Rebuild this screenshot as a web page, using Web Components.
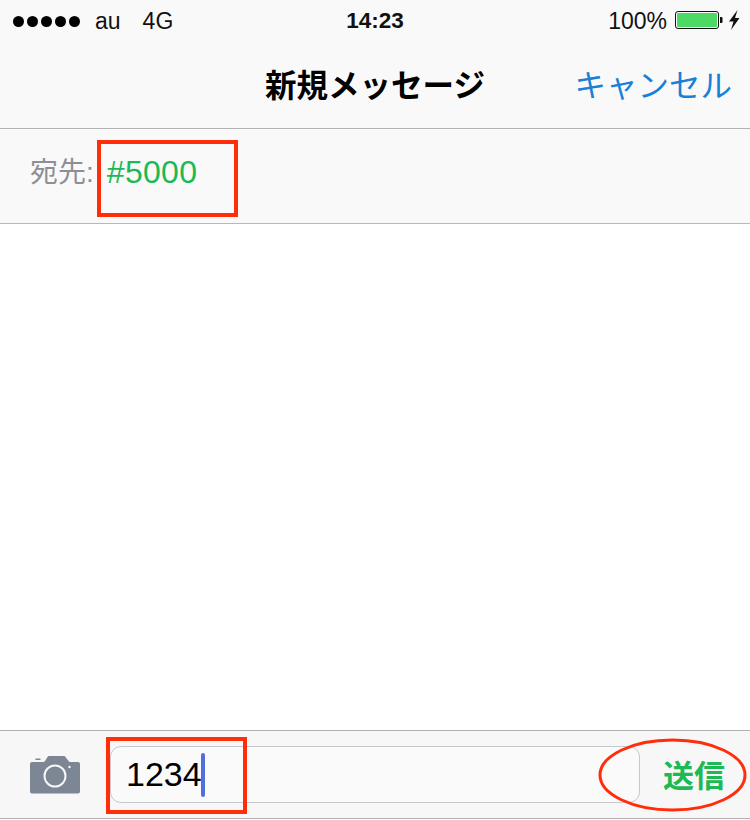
<!DOCTYPE html>
<html lang="ja">
<head>
<meta charset="utf-8">
<title>新規メッセージ</title>
<style>
  html, body { margin: 0; height: 100%; background: #fff; }
  body {
    width: 750px;
    height: 820px;
    overflow: hidden;
    display: flex;
    flex-direction: column;
    font-family: "Liberation Sans", "Noto Sans CJK JP", sans-serif;
  }
  message-body { flex: 1; }
</style>
</head>
<body>
<status-bar></status-bar>
<nav-bar title="新規メッセージ" action="キャンセル"></nav-bar>
<recipient-row label="宛先:" value="#5000"></recipient-row>
<message-body></message-body>
<compose-bar text="1234" send="送信"></compose-bar>

<script>
// Shared font stack, custom properties would work too but this is shorter
const FONT = `"Liberation Sans", "Noto Sans CJK JP", sans-serif`;

class StatusBar extends HTMLElement {
  constructor() {
    super();
    this.attachShadow({ mode: 'open' });
  }

  connectedCallback() {
    this.shadowRoot.innerHTML = `
      <style>
        :host {
          display: grid;
          grid-template-columns: 1fr auto 1fr;
          align-items: center;
          height: 42px;
          background: #f9f9f9;
          color: #111;
          font: 23px ${FONT};
        }
        .left { display: flex; align-items: center; padding-left: 13px; }
        .dots { display: flex; gap: 3px; margin-right: 15px; }
        .dots i { width: 11px; height: 11px; border-radius: 50%; background: #000; }
        .net { margin-left: 22px; }
        .time { font-size: 22.500px; font-weight: 700; }
        .right { display: flex; align-items: center; justify-content: flex-end; padding-right: 10px; }
        .pct { margin-right: 8px; }
        svg { display: block; margin-bottom: 2px; }
      </style>
      <div class="left">
        <div class="dots"><i></i><i></i><i></i><i></i><i></i></div>
        <span>au</span><span class="net">4G</span>
      </div>
      <div class="time">14:23</div>
      <div class="right">
        <span class="pct">100%</span>
        <svg width="65" height="22" viewBox="0 0 65 22">
          <rect x="0.5" y="2.5" width="43" height="17" rx="2.5" fill="none" stroke="#111"/>
          <rect x="2" y="4" width="40" height="14" rx="1" fill="#4cd964"/>
          <path d="M45 8h1.5a1 1 0 0 1 1 1v4a1 1 0 0 1-1 1H45z" fill="#111"/>
          <path d="M62.500 1 L54 12.500 H58.500 L56 21 L64.500 9 H60z" fill="#111"/>
        </svg>
      </div>
    `;
  }
}

class NavBar extends HTMLElement {
  constructor() {
    super();
    this.attachShadow({ mode: 'open' });
  }

  connectedCallback() {
    const title = this.getAttribute('title');
    const action = this.getAttribute('action');
    this.shadowRoot.innerHTML = `
      <style>
        :host {
          display: grid;
          grid-template-columns: 1fr auto 1fr;
          align-items: center;
          height: 87px;
          box-sizing: border-box;
          padding: 0 0 5px;
          background: #f9f9f9;
          border-bottom: 1px solid #b2b2b2;
          font-family: ${FONT};
        }
        .title { font-size: 31.500px; font-weight: 700; color: #000; }
        .action { justify-self: end; margin-right: 18px; font-size: 31.500px; color: #1a7fd6; }
      </style>
      <span></span>
      <span class="title">${title}</span>
      <span class="action">${action}</span>
    `;
  }
}

class AnnoBox extends HTMLElement {
  constructor() {
    super();
    this.attachShadow({ mode: 'open' });
  }

  connectedCallback() {
    this.shadowRoot.innerHTML = `
      <style>
        :host {
          display: block;
          position: absolute;
          box-sizing: border-box;
          border: 4px solid #ff2d0a;
          pointer-events: none;
        }
      </style>
    `;
  }
}

class RecipientRow extends HTMLElement {
  constructor() {
    super();
    this.attachShadow({ mode: 'open' });
  }

  connectedCallback() {
    this.shadowRoot.innerHTML = `
      <style>
        :host {
          display: flex;
          align-items: center;
          position: relative;
          height: 95px;
          box-sizing: border-box;
          padding: 0 0 5px 30px;
          background: #f9f9f9;
          border-bottom: 1px solid #b8b8b8;
          font-family: ${FONT};
        }
        .label { color: #8e8e93; font-size: 28px; margin: 0 13px 7px 0; }
        .value { color: #1cb954; font-size: 32px; letter-spacing: 0.3px; margin-bottom: 2px; }
        anno-box { left: 97px; top: 11px; width: 141px; height: 77px; }
      </style>
      <span class="label">${this.getAttribute('label')}</span>
      <span class="value">${this.getAttribute('value')}</span>
      <anno-box></anno-box>
    `;
  }
}

class ComposeBar extends HTMLElement {
  constructor() {
    super();
    this.attachShadow({ mode: 'open' });
  }

  connectedCallback() {
    this.shadowRoot.innerHTML = `
      <style>
        :host {
          display: flex;
          align-items: center;
          position: relative;
          height: 89px;
          box-sizing: border-box;
          margin-bottom: 1px;
          padding: 0 0 0 30px;
          background: #f7f7f7;
          border-top: 1px solid #b2b2b2;
          border-bottom: 1px solid #b2b2b2;
          font-family: ${FONT};
        }
        svg.cam { display: block; flex: none; margin-right: 30px; }
        .field {
          flex: none;
          display: flex;
          align-items: center;
          box-sizing: border-box;
          width: 530px;
          height: 57px;
          padding-left: 15px;
          background: #fafafa;
          border: 1px solid #c8c8cc;
          border-radius: 11px;
          font-size: 34px;
          color: #000;
        }
        .caret {
          width: 4px;
          height: 44px;
          margin-left: -1px;
          border-radius: 2px;
          background: #4f6fdc;
        }
        .send {
          flex: 1;
          text-align: center;
          padding: 0 2px 2px 0;
          font-size: 31px;
          font-weight: 700;
          color: #1cb954;
        }
        anno-box { left: 106px; top: 6px; width: 141px; height: 77px; }
        svg.ring { position: absolute; left: 598px; top: 6px; pointer-events: none; }
      </style>
      <svg class="cam" width="50" height="38" viewBox="0 0 50 38">
        <path fill-rule="evenodd" fill="#7d8694" d="M2 6h9l1.500 0 1.500 0 1-1 2.500-4q.5-1 1.500-1h15q1 0 1.500 1L38.500 5q.5 1 1.500 1h8q2 0 2 2v27.500q0 2-2 2H2q-2 0-2-2V8q0-2 2-2zM25 8.500a11.500 11.500 0 1 0 0 23a11.500 11.500 0 1 0 0-23zM25 10.500a9.500 9.500 0 1 1 0 19a9.500 9.500 0 1 1 0-19z"/>
        <rect x="5.500" y="2.500" width="5" height="1.500" fill="#7d8694"/>
        <circle cx="39.500" cy="11" r="1.200" fill="#f7f7f7"/>
      </svg>
      <div class="field"><span>${this.getAttribute('text')}</span><i class="caret"></i></div>
      <div class="send">${this.getAttribute('send')}</div>
      <anno-box></anno-box>
      <svg class="ring" width="152" height="76" viewBox="0 0 152 76">
        <ellipse cx="74.500" cy="38" rx="72.500" ry="35" fill="none" stroke="#ff2d0a" stroke-width="3"/>
      </svg>
    `;
  }
}

customElements.define('status-bar', StatusBar);
customElements.define('nav-bar', NavBar);
customElements.define('anno-box', AnnoBox);
customElements.define('recipient-row', RecipientRow);
customElements.define('compose-bar', ComposeBar);
</script>
</body>
</html>
